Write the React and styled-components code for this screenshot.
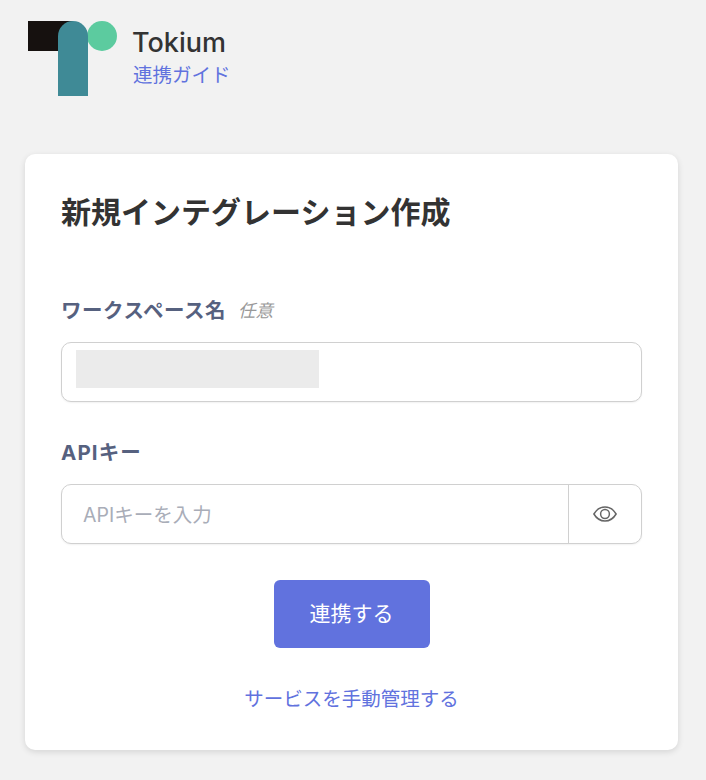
import React from "react";
import styled, { createGlobalStyle } from "styled-components";

const Global = createGlobalStyle`
  html, body { margin: 0; padding: 0; background: #f2f2f2; }
  body { font-family: Inter, "Noto Sans CJK JP", sans-serif; }
  * { box-sizing: border-box; }
`;

const Page = styled.div`
  width: 706px;
  height: 780px;
  overflow: hidden;
  padding: 21px 28px 0 25px;
  display: flex;
  flex-direction: column;
`;

const Header = styled.header`
  display: flex;
  align-items: flex-start;
  padding-left: 3px;
  height: 133px;
`;

const LogoSvg = styled.svg`
  flex: none;
  display: block;
`;

const Brand = styled.div`
  display: flex;
  flex-direction: column;
  margin-left: 16px;
  padding-top: 6px;
`;

const BrandName = styled.div`
  font-size: 27px;
  line-height: 32px;
  font-weight: 500;
  margin-left: -1px;
  color: #333333;
`;

const GuideLink = styled.a`
  font-size: 19.5px;
  line-height: 28px;
  margin-top: 2px;
  color: #6172de;
  text-decoration: none;
`;

const Card = styled.main`
  width: 653px;
  height: 596px;
  background: #ffffff;
  border-radius: 10px;
  box-shadow: 0 2px 6px rgba(0, 0, 0, 0.12);
  padding: 36px 36px 0;
  display: flex;
  flex-direction: column;
`;

const Title = styled.h1`
  margin: 0;
  font-size: 30px;
  line-height: 44px;
  font-weight: 700;
  color: #333333;
`;

const Field = styled.div`
  display: flex;
  flex-direction: column;
  margin-top: ${(p) => p.$top}px;
`;

const LabelRow = styled.div`
  display: flex;
  align-items: center;
  height: 30px;
  margin-bottom: 16px;
`;

const Label = styled.label`
  font-size: 20.5px;
  letter-spacing: ${(p) => p.$spacing}px;
  line-height: 30px;
  font-weight: 700;
  color: #56617f;
`;

const Optional = styled.span`
  font-size: 17.5px;
  font-style: italic;
  color: #999999;
  margin-left: 12px;
  margin-bottom: 4px;
`;

const InputFrame = styled.div`
  width: 581px;
  height: 60px;
  border: 1px solid #d0d0d0;
  border-radius: 10px;
  box-shadow: 0 1px 2px rgba(0, 0, 0, 0.06);
  background: #ffffff;
  display: flex;
  align-items: center;
`;

const Redaction = styled.div`
  width: 243px;
  height: 38px;
  margin: 0 0 6px 14px;
  background: #ebebeb;
`;

const Input = styled.input`
  flex: 1;
  min-width: 0;
  height: 100%;
  border: 0;
  outline: 0;
  background: transparent;
  padding: 2px 21px 0;
  font: inherit;
  font-size: 19.5px;
  color: #333333;
  &::placeholder { color: #a9adb8; opacity: 1; }
`;

const EyeButton = styled.button`
  flex: none;
  width: 73px;
  height: 100%;
  border: 0;
  border-left: 1px solid #d0d0d0;
  background: transparent;
  padding: 0;
  display: flex;
  align-items: center;
  justify-content: center;
  color: #666666;
`;

const Submit = styled.button`
  align-self: center;
  width: 156px;
  height: 68px;
  margin-top: 36px;
  padding: 0 0 4px;
  border: 0;
  border-radius: 6px;
  background: #6172de;
  color: #ffffff;
  font: inherit;
  font-size: 21px;
  font-weight: 400;
`;

const ManualLink = styled.a`
  align-self: center;
  margin-top: 37px;
  font-size: 19.5px;
  line-height: 28px;
  color: #6172de;
  text-decoration: none;
`;

const Logo = () => (
  <LogoSvg width="89" height="75" viewBox="0 0 89 75" aria-hidden="true">
    <rect x="0" y="0" width="45" height="30" fill="#16110f" />
    <circle cx="74" cy="15" r="15" fill="#5ccb9f" />
    <path d="M30 15a15 15 0 0 1 30 0v60H30z" fill="#3f8a96" />
  </LogoSvg>
);

const Eye = () => (
  <svg width="24" height="16" viewBox="0 0 24 16" fill="none" stroke="currentColor" strokeWidth="1.5" aria-hidden="true">
    <path d="M.9 8C3.6 3.4 7.4 1 12 1s8.4 2.4 11.1 7c-2.7 4.6-6.5 7-11.1 7S3.6 12.6.9 8z" />
    <circle cx="12" cy="8" r="4.4" />
  </svg>
);

export default function App() {
  return (
    <Page>
      <Global />
      <Header>
        <Logo />
        <Brand>
          <BrandName>Tokium</BrandName>
          <GuideLink href="#">連携ガイド</GuideLink>
        </Brand>
      </Header>
      <Card>
        <Title>新規インテグレーション作成</Title>
        <Field $top={62}>
          <LabelRow>
            <Label $spacing={0.5}>ワークスペース名</Label>
            <Optional>任意</Optional>
          </LabelRow>
          <InputFrame>
            <Redaction />
          </InputFrame>
        </Field>
        <Field $top={36}>
          <LabelRow>
            <Label $spacing={1.1}>APIキー</Label>
          </LabelRow>
          <InputFrame>
            <Input placeholder="APIキーを入力" />
            <EyeButton type="button" aria-label="表示">
              <Eye />
            </EyeButton>
          </InputFrame>
        </Field>
        <Submit type="button">連携する</Submit>
        <ManualLink href="#">サービスを手動管理する</ManualLink>
      </Card>
    </Page>
  );
}
